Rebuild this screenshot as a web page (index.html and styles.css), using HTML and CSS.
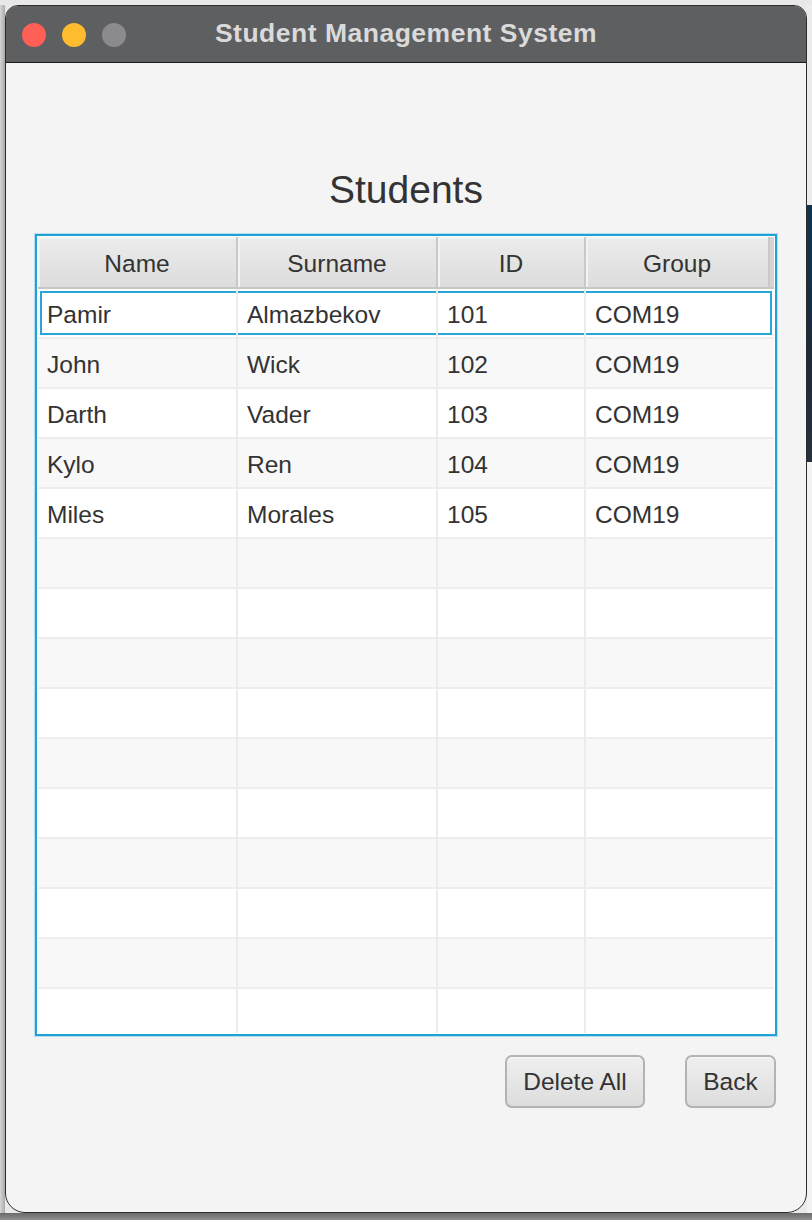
FILE: index.html
```html
<!DOCTYPE html>
<html lang="en">
<head>
<meta charset="utf-8">
<title>Student Management System</title>
<link rel="stylesheet" href="styles.css">
</head>
<body>
<div class="screen">
  <div class="strip strip-top"></div>
  <div class="strip strip-left"></div>
  <div class="window">
    <div class="titlebar">
      <div class="lights">
        <span class="light light-red"></span>
        <span class="light light-yellow"></span>
        <span class="light light-gray"></span>
      </div>
      <div class="title">Student Management System</div>
    </div>
    <div class="content">
      <h1 class="heading">Students</h1>
      <div class="table">
        <div class="thead">
          <div class="th col-name">Name</div>
          <div class="th col-surname">Surname</div>
          <div class="th col-id">ID</div>
          <div class="th col-group">Group</div>
          <div class="th col-fill"></div>
        </div>
        <div class="tbody">
          <div class="row selected"><div class="td col-name">Pamir</div><div class="td col-surname">Almazbekov</div><div class="td col-id">101</div><div class="td col-group">COM19</div></div>
          <div class="row"><div class="td col-name">John</div><div class="td col-surname">Wick</div><div class="td col-id">102</div><div class="td col-group">COM19</div></div>
          <div class="row"><div class="td col-name">Darth</div><div class="td col-surname">Vader</div><div class="td col-id">103</div><div class="td col-group">COM19</div></div>
          <div class="row"><div class="td col-name">Kylo</div><div class="td col-surname">Ren</div><div class="td col-id">104</div><div class="td col-group">COM19</div></div>
          <div class="row"><div class="td col-name">Miles</div><div class="td col-surname">Morales</div><div class="td col-id">105</div><div class="td col-group">COM19</div></div>
          <div class="row"><div class="td col-name"></div><div class="td col-surname"></div><div class="td col-id"></div><div class="td col-group"></div></div>
          <div class="row"><div class="td col-name"></div><div class="td col-surname"></div><div class="td col-id"></div><div class="td col-group"></div></div>
          <div class="row"><div class="td col-name"></div><div class="td col-surname"></div><div class="td col-id"></div><div class="td col-group"></div></div>
          <div class="row"><div class="td col-name"></div><div class="td col-surname"></div><div class="td col-id"></div><div class="td col-group"></div></div>
          <div class="row"><div class="td col-name"></div><div class="td col-surname"></div><div class="td col-id"></div><div class="td col-group"></div></div>
          <div class="row"><div class="td col-name"></div><div class="td col-surname"></div><div class="td col-id"></div><div class="td col-group"></div></div>
          <div class="row"><div class="td col-name"></div><div class="td col-surname"></div><div class="td col-id"></div><div class="td col-group"></div></div>
          <div class="row"><div class="td col-name"></div><div class="td col-surname"></div><div class="td col-id"></div><div class="td col-group"></div></div>
          <div class="row"><div class="td col-name"></div><div class="td col-surname"></div><div class="td col-id"></div><div class="td col-group"></div></div>
          <div class="row"><div class="td col-name"></div><div class="td col-surname"></div><div class="td col-id"></div><div class="td col-group"></div></div>
        </div>
      </div>
      <div class="actions">
        <button class="btn btn-delete" type="button">Delete All</button>
        <button class="btn btn-back" type="button">Back</button>
      </div>
    </div>
  </div>
  <div class="strip strip-right">
    <div class="seg seg-light"></div>
    <div class="seg seg-dark"></div>
    <div class="seg seg-page"></div>
  </div>
  <div class="strip strip-bottom"></div>
</div>
</body>
</html>
```

FILE: styles.css
```css
* { box-sizing: border-box; }

html, body {
  margin: 0;
  padding: 0;
  background: #e9e9e9;
  font-family: "Liberation Sans", Arial, sans-serif;
}

.screen {
  width: 812px;
  height: 1220px;
  overflow: hidden;
  display: grid;
  grid-template-columns: 5px 802px 5px;
  grid-template-rows: 5px 1208px 7px;
}

.strip-top {
  grid-column: 1 / 4;
  grid-row: 1;
  background: #e8e8e8;
}

.strip-left {
  grid-column: 1;
  grid-row: 2;
  background: linear-gradient(90deg, #d6d6d6, #a9a9a9);
}

.strip-right {
  grid-column: 3;
  grid-row: 2;
  display: flex;
  flex-direction: column;
}

.seg-light { height: 200px; background: #ececec; }
.seg-dark { height: 257px; background: linear-gradient(180deg, #0f3550, #1c2a3a 60%, #24313f); }
.seg-page { flex: 1; background: #f2f2f2; }

.strip-bottom {
  grid-column: 1 / 4;
  grid-row: 3;
  background: linear-gradient(180deg, #6a6a6a, #8f8f8f);
}

.window {
  grid-column: 2;
  grid-row: 2;
  border: 1px solid #2b2b2b;
  border-radius: 13px 13px 20px 20px;
  overflow: hidden;
  background: #f4f4f4;
  display: flex;
  flex-direction: column;
}

.titlebar {
  height: 57px;
  flex: none;
  background: #5e5f61;
  border-bottom: 1px solid #1a1a1a;
  display: grid;
  grid-template-columns: 1fr auto 1fr;
  align-items: center;
}

.lights {
  display: flex;
  gap: 16px;
  padding-left: 16px;
  padding-top: 1px;
}

.light {
  width: 24px;
  height: 24px;
  border-radius: 50%;
  display: block;
}

.light-red { background: #fe5f57; }
.light-yellow { background: #febc2e; }
.light-gray { background: #8b8b8d; }

.title {
  color: #dadadb;
  font-weight: bold;
  font-size: 26.5px;
  letter-spacing: 0.5px;
  padding-bottom: 1px;
}

.content {
  flex: 1;
  padding: 104px 29px 0 29px;
  display: flex;
  flex-direction: column;
}

.heading {
  margin: 0 0 21px 0;
  text-align: center;
  font-weight: normal;
  font-size: 39px;
  line-height: 46px;
  color: #333333;
}

.table {
  height: 802px;
  border: 2px solid #1ea2d7;
  box-shadow: 0 0 0 1px rgba(30, 162, 215, 0.28);
  background: #ffffff;
  padding: 1px;
  display: flex;
  flex-direction: column;
  overflow: hidden;
}

.col-name { width: 200px; }
.col-surname { width: 200px; }
.col-id { width: 148px; }
.col-group { width: 184px; }
.col-fill { width: 4px; }

.thead {
  display: flex;
  height: 52px;
  flex: none;
  border-bottom: 2px solid #c6c6c6;
  background: #d9d9d9;
}

.th {
  height: 50px;
  background: linear-gradient(180deg, #ececec, #dcdcdc);
  border-right: 2px solid #c8c8c8;
  box-shadow: inset 2px 2px 0 #f3f3f3;
  font-size: 24.5px;
  color: #333333;
  display: flex;
  align-items: center;
  justify-content: center;
  padding-top: 3px;
}

.th.col-fill {
  border-right: 0;
  background: #d4d4d4;
  box-shadow: none;
}

.tbody {
  flex: 1;
  overflow: hidden;
}

.row {
  display: flex;
  height: 50px;
  border-bottom: 2px solid #ededed;
  background: #ffffff;
}

.row:nth-child(even) { background: #f8f8f8; }

.row.selected {
  background: #ffffff;
  box-shadow: inset 0 0 0 2px #ffffff, inset 0 0 0 4px #2aa5d8;
}

.td {
  height: 48px;
  border-right: 2px solid #ececec;
  padding-left: 9px;
  padding-top: 3px;
  font-size: 24.5px;
  color: #333333;
  display: flex;
  align-items: center;
}

.td.col-group { border-right: 0; }

.actions {
  margin-top: 19px;
  display: flex;
  justify-content: flex-end;
  gap: 40px;
  padding-right: 1px;
}

.btn {
  height: 53px;
  border: 2px solid #b3b3b3;
  border-radius: 7px;
  background: linear-gradient(180deg, #efefef, #dddddd);
  box-shadow: inset 0 1px 0 #f8f8f8;
  font-family: "Liberation Sans", Arial, sans-serif;
  font-size: 24.5px;
  color: #333333;
  padding: 1px 0 0 0;
  text-align: center;
}

.btn-delete { width: 140px; }
.btn-back { width: 91px; }
```
